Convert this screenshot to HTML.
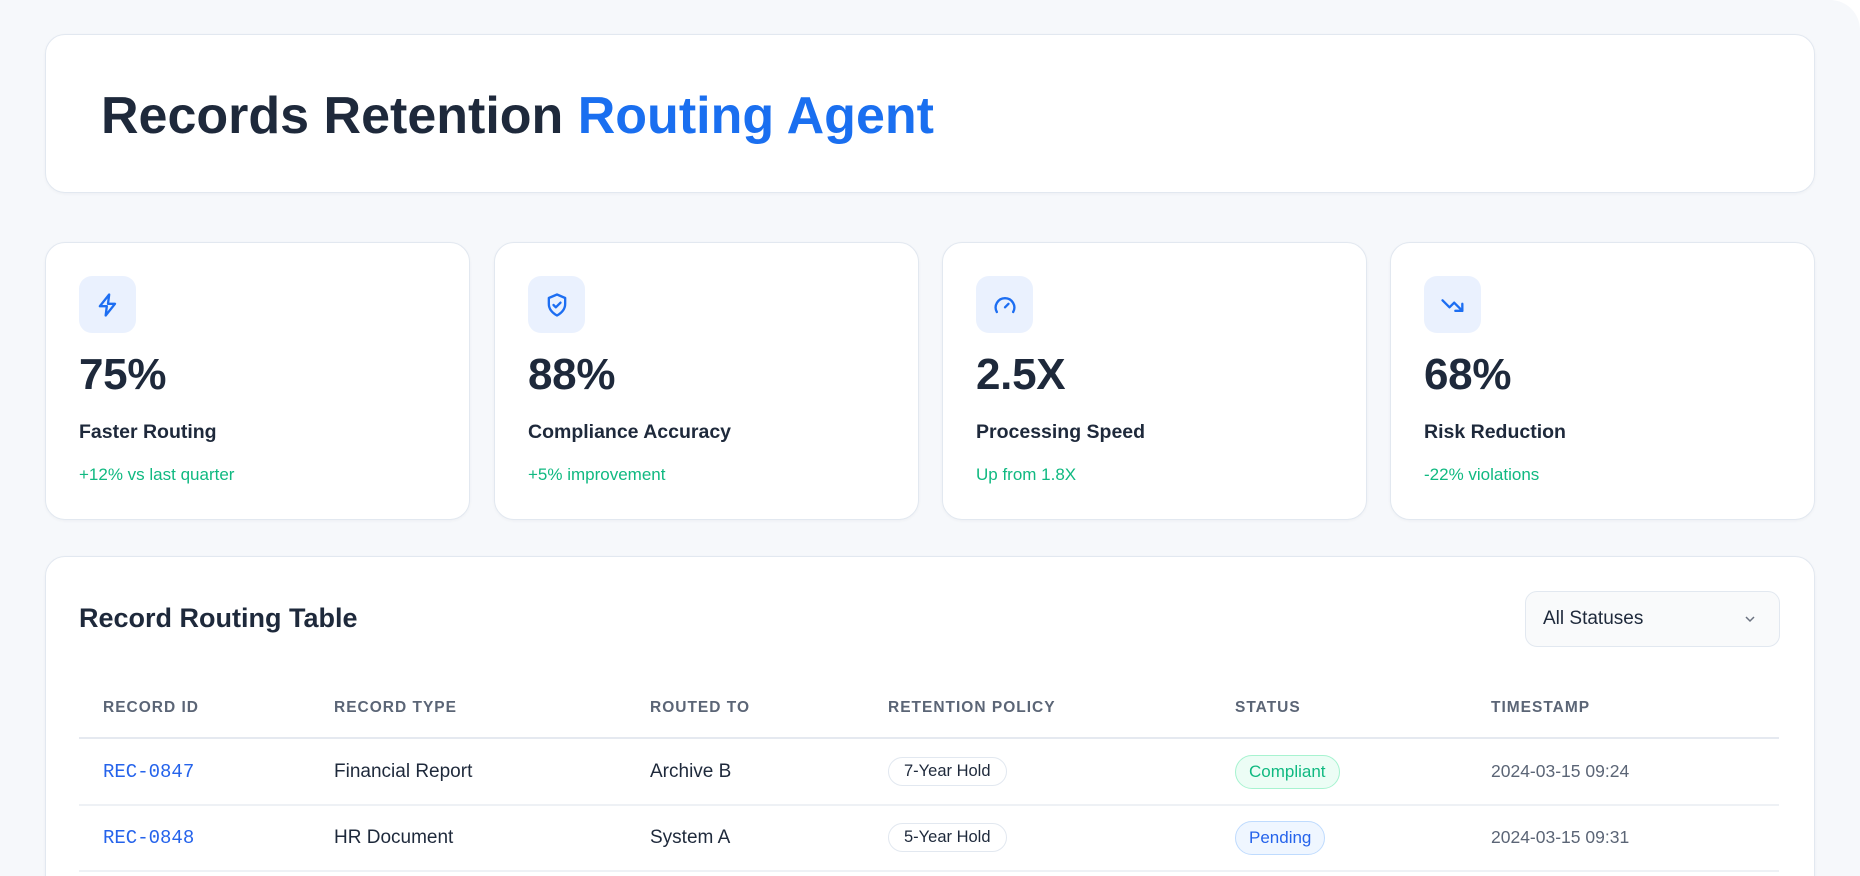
<!DOCTYPE html>
<html><head><meta charset="utf-8"><style>
*{box-sizing:border-box;margin:0;padding:0}
html,body{width:1860px;height:876px;overflow:hidden}
body{background:#fff;font-family:"Liberation Sans",sans-serif;color:#1e293b;position:relative}
.page{position:absolute;left:0;top:0;width:1860px;height:876px;background:#f6f8fb;border-radius:0 30px 0 0;overflow:hidden}
.card{position:absolute;background:#fff;border:1.5px solid #e2e8f0;border-radius:20px;box-shadow:0 1px 3px rgba(15,23,42,.04)}
.ab{position:absolute;white-space:nowrap}
.icon{position:absolute;left:33px;top:33px;width:57px;height:57px;border-radius:13px;background:#eaf1fe;display:flex;align-items:center;justify-content:center}
.num{position:absolute;left:33px;top:107px;font-size:44px;font-weight:bold;color:#1e293b;letter-spacing:-0.3px}
.lbl{position:absolute;left:33px;top:178px;font-size:19.5px;color:#1e293b;font-weight:bold}
.sub{position:absolute;left:33px;top:222px;font-size:17px;color:#10b981}
.th{position:absolute;top:699px;font-size:15.5px;font-weight:bold;color:#5b6576;letter-spacing:1px}
.td{position:absolute;font-size:19px;color:#1e293b;white-space:nowrap}
.id{font-family:"Liberation Mono",monospace;color:#2563eb;font-size:19px}
.pill{position:absolute;height:29px;border:1.5px solid #e2e8f0;border-radius:15px;font-size:16.5px;line-height:26px;padding:0 15px;color:#1e293b;background:#fff}
.st{position:absolute;height:34px;border-radius:17px;font-size:17px;line-height:31px;padding:0 13px}
.line{position:absolute;left:79px;width:1700px;height:1.5px;background:#eef1f5}
</style></head><body>
<div class="page">
<div class="card" style="left:45px;top:34px;width:1770px;height:159px"></div>
<div class="ab" style="left:101px;top:86px;font-size:52px;font-weight:bold;color:#1e293b;letter-spacing:0px">Records Retention <span style="color:#1a6ff0">Routing Agent</span></div>

<div class="card" style="left:45px;top:242px;width:425px;height:278px">
<div class="icon"><svg width="28" height="28" viewBox="0 0 24 24" fill="none" stroke="#1d6ef2" stroke-width="2" stroke-linejoin="round"><path d="M13 3L5 13h6l-1 8 8-10h-6z"/></svg></div>
<div class="num">75%</div><div class="lbl">Faster Routing</div><div class="sub">+12% vs last quarter</div></div>

<div class="card" style="left:494px;top:242px;width:425px;height:278px">
<div class="icon"><svg width="28" height="28" viewBox="0 0 24 24" fill="none" stroke="#1d6ef2" stroke-width="2" stroke-linejoin="round" stroke-linecap="round"><path d="M12 3l7 3v5c0 5-3.5 8-7 10-3.5-2-7-5-7-10V6z"/><path d="M9 12l2 2 4-4"/></svg></div>
<div class="num">88%</div><div class="lbl">Compliance Accuracy</div><div class="sub">+5% improvement</div></div>

<div class="card" style="left:942px;top:242px;width:425px;height:278px">
<div class="icon"><svg width="28" height="28" viewBox="0 0 24 24" fill="none" stroke="#1d6ef2" stroke-width="2" stroke-linecap="round"><path d="M5 18a8 8 0 1 1 14 0"/><path d="M12 14l3-3"/></svg></div>
<div class="num">2.5X</div><div class="lbl">Processing Speed</div><div class="sub">Up from 1.8X</div></div>

<div class="card" style="left:1390px;top:242px;width:425px;height:278px">
<div class="icon"><svg width="28" height="28" viewBox="0 0 24 24" fill="none" stroke="#1d6ef2" stroke-width="2" stroke-linecap="round" stroke-linejoin="round"><path d="M3 8l6 6 4-4 7 7"/><path d="M14 17h6v-6"/></svg></div>
<div class="num">68%</div><div class="lbl">Risk Reduction</div><div class="sub">-22% violations</div></div>

<div class="card" style="left:45px;top:556px;width:1770px;height:360px"></div>
<div class="ab" style="left:79px;top:603px;font-size:27px;font-weight:bold;color:#1e293b">Record Routing Table</div>
<div class="ab" style="left:1525px;top:591px;width:255px;height:56px;border:1.5px solid #e2e8f0;border-radius:12px;background:#f9fafb"></div>
<div class="ab" style="left:1543px;top:608px;font-size:19px;color:#1e293b">All Statuses</div>
<svg class="ab" style="left:1743px;top:613px" width="14" height="12" viewBox="0 0 14 12" fill="none" stroke="#6b7280" stroke-width="1.5"><path d="M3 4l4 4 4-4"/></svg>

<div class="th" style="left:103px">RECORD ID</div>
<div class="th" style="left:334px">RECORD TYPE</div>
<div class="th" style="left:650px">ROUTED TO</div>
<div class="th" style="left:888px">RETENTION POLICY</div>
<div class="th" style="left:1235px">STATUS</div>
<div class="th" style="left:1491px">TIMESTAMP</div>
<div class="line" style="top:737px;height:2px;background:#e5e9f0"></div>

<div class="td id" style="left:103px;top:761px">REC-0847</div>
<div class="td" style="left:334px;top:761px">Financial Report</div>
<div class="td" style="left:650px;top:761px">Archive B</div>
<div class="pill" style="left:888px;top:757px">7-Year Hold</div>
<div class="st" style="left:1235px;top:755px;background:#ecfdf5;border:1.5px solid #a7f3d0;color:#10b981">Compliant</div>
<div class="td" style="left:1491px;top:761px;color:#5b6576;font-size:17.5px">2024-03-15 09:24</div>
<div class="line" style="top:804px"></div>

<div class="td id" style="left:103px;top:827px">REC-0848</div>
<div class="td" style="left:334px;top:827px">HR Document</div>
<div class="td" style="left:650px;top:827px">System A</div>
<div class="pill" style="left:888px;top:823px">5-Year Hold</div>
<div class="st" style="left:1235px;top:821px;background:#eff6ff;border:1.5px solid #bfdbfe;color:#2563eb">Pending</div>
<div class="td" style="left:1491px;top:827px;color:#5b6576;font-size:17.5px">2024-03-15 09:31</div>
<div class="line" style="top:870px"></div>
</div>
</body></html>
